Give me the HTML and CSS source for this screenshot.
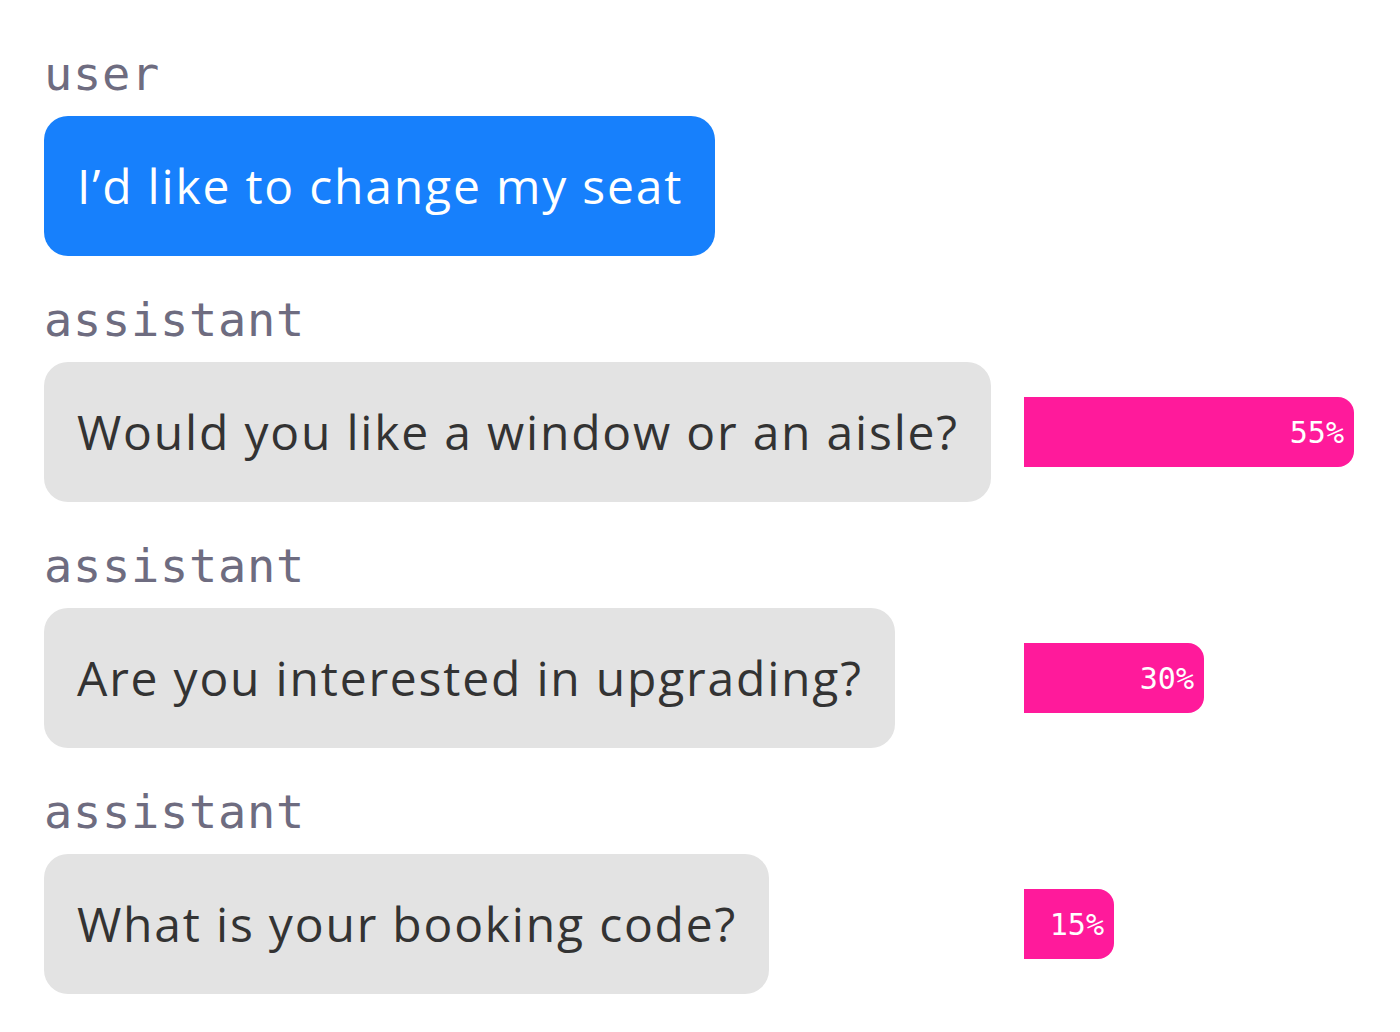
FILE: index.html
```html
<!DOCTYPE html>
<html lang="en">
<head>
<meta charset="utf-8">
<title>Chat</title>
<link rel="stylesheet" href="styles.css">
</head>
<body>
<main class="chat">
  <section class="msg">
    <div class="role">user</div>
    <div class="row">
      <div class="bubble bubble-user">I’d like to change my seat</div>
    </div>
  </section>
  <section class="msg">
    <div class="role">assistant</div>
    <div class="row">
      <div class="bubble bubble-bot">Would you like a window or an aisle?</div>
      <div class="bar" style="width:330px">55%</div>
    </div>
  </section>
  <section class="msg">
    <div class="role">assistant</div>
    <div class="row">
      <div class="bubble bubble-bot">Are you interested in upgrading?</div>
      <div class="bar" style="width:180px">30%</div>
    </div>
  </section>
  <section class="msg">
    <div class="role">assistant</div>
    <div class="row">
      <div class="bubble bubble-bot">What is your booking code?</div>
      <div class="bar" style="width:90px">15%</div>
    </div>
  </section>
</main>
</body>
</html>
```
FILE: styles.css
```css
html, body {
  margin: 0;
  padding: 0;
  background: #ffffff;
}

.chat {
  padding: 10px 0 0 44px;
  display: flex;
  flex-direction: column;
}

.msg {
  display: flex;
  flex-direction: column;
}

.role {
  height: 106px;
  box-sizing: border-box;
  display: flex;
  align-items: flex-end;
  padding-bottom: 19px;
  font-family: "DejaVu Sans Mono", "Liberation Mono", monospace;
  font-size: 47px;
  letter-spacing: 0.7px;
  line-height: 47px;
  color: #6e6c80;
}

.row {
  display: grid;
  grid-template-columns: 980px auto;
  align-items: center;
  justify-items: start;
}

.bubble {
  height: 140px;
  box-sizing: border-box;
  padding: 0 32px 0 33px;
  border-radius: 24px;
  display: flex;
  align-items: center;
  font-family: "Open Sans", "Liberation Sans", sans-serif;
  font-weight: 400;
  font-size: 48px;
  letter-spacing: 1.8px;
  line-height: 1;
  white-space: nowrap;
}

.bubble-user {
  background: #1780fc;
  color: #ffffff;
}

.bubble-bot {
  background: #e3e3e3;
  color: #333333;
}

.bar {
  height: 70px;
  box-sizing: border-box;
  background: #ff1a9b;
  border-radius: 0 16px 16px 0;
  display: flex;
  align-items: center;
  justify-content: flex-end;
  padding-right: 10px;
  font-family: "DejaVu Sans Mono", "Liberation Mono", monospace;
  font-size: 30px;
  color: #ffffff;
}
```
